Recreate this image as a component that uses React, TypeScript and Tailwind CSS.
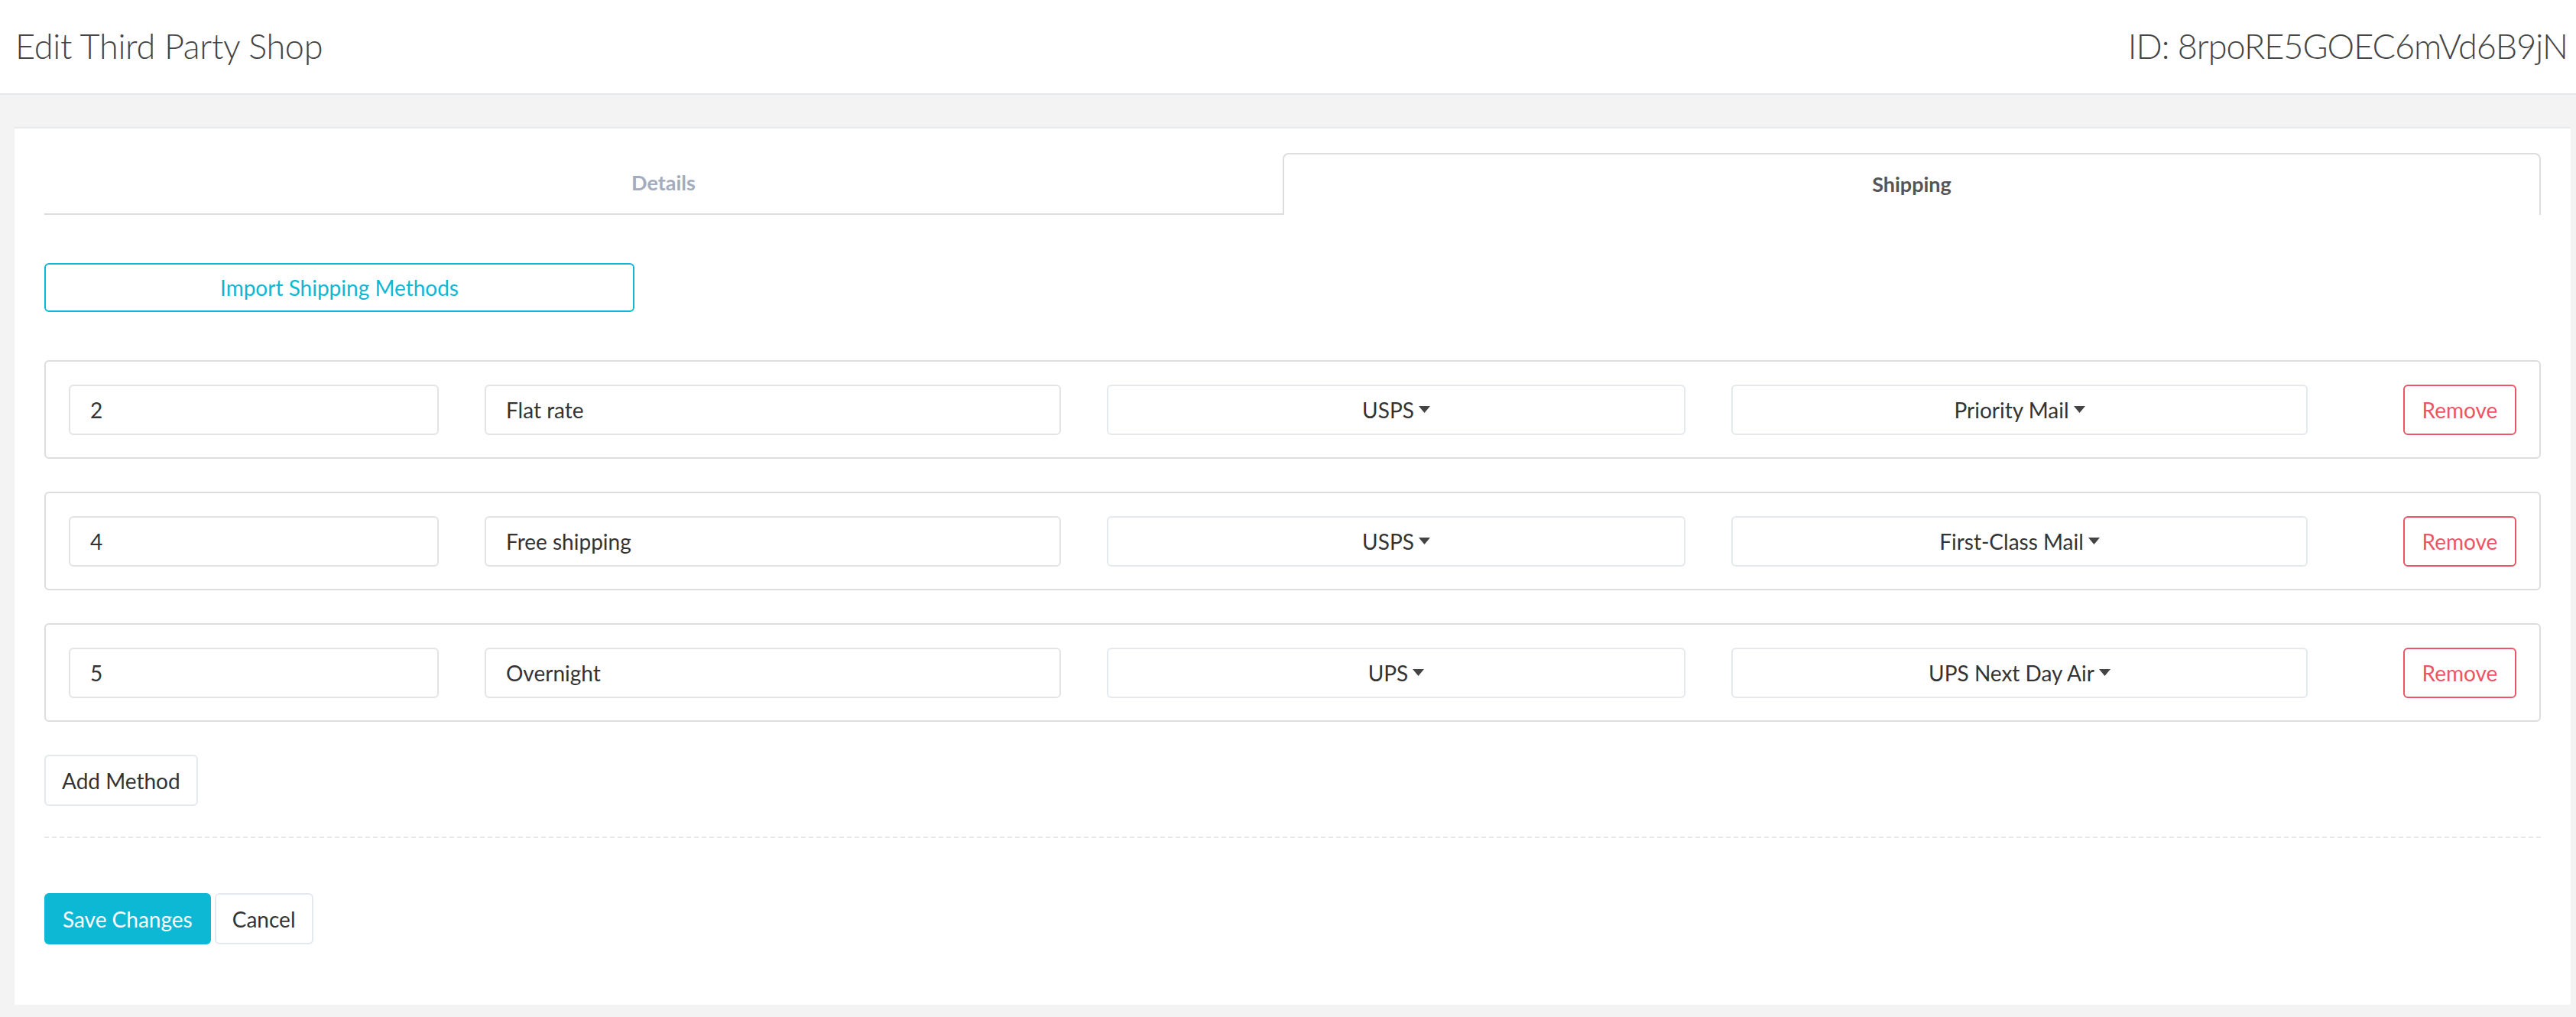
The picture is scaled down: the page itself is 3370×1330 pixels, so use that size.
import { useState } from 'react';

type Method = {
  id: string;
  name: string;
  carrier: string;
  service: string;
};

const INITIAL_METHODS: Method[] = [
  { id: '2', name: 'Flat rate', carrier: 'USPS', service: 'Priority Mail' },
  { id: '4', name: 'Free shipping', carrier: 'USPS', service: 'First-Class Mail' },
  { id: '5', name: 'Overnight', carrier: 'UPS', service: 'UPS Next Day Air' },
];

const FONT = "font-['Lato','Noto_Sans',sans-serif]";

function Caret() {
  return (
    <svg width="15" height="9" viewBox="0 0 15 9" className="ml-[6px] inline-block fill-[#444]">
      <path d="M0 0h15L7.5 9z" />
    </svg>
  );
}

function Dropdown({ label }: { label: string }) {
  return (
    <button
      type="button"
      className="flex h-[66px] w-full items-center justify-center rounded-[6px] border-2 border-[#e5e9ed] bg-white text-[28px] text-[#333]"
    >
      {label}
      <Caret />
    </button>
  );
}

function TextField({ value }: { value: string }) {
  return (
    <input
      readOnly
      value={value}
      className="h-[66px] w-full rounded-[6px] border-2 border-[#e3e3e3] bg-white px-[26px] text-[28px] text-[#333] outline-none"
    />
  );
}

export default function App() {
  const [tab, setTab] = useState<'details' | 'shipping'>('shipping');
  const [methods, setMethods] = useState<Method[]>(INITIAL_METHODS);

  const removeMethod = (idx: number) => setMethods((m) => m.filter((_, i) => i !== idx));
  const addMethod = () =>
    setMethods((m) => [...m, { id: '', name: '', carrier: 'USPS', service: 'Priority Mail' }]);

  return (
    <div className={`${FONT} min-h-[1330px] bg-[#f3f3f3] text-[#333]`}>
      {/* page header */}
      <div className="flex h-[124px] items-center justify-between border-b-2 border-[#e6e9ec] bg-white pl-[20px] pr-[11px]">
        <h1 className="text-[45px] font-light tracking-[-0.3px] text-[#444]">Edit Third Party Shop</h1>
        <div className="text-[45px] font-light tracking-[-1px] text-[#444]">ID: 8rpoRE5GOEC6mVd6B9jN</div>
      </div>

      <div className="pl-[19px] pr-[7px] pt-[42px] pb-[17px]">
        <div className="border-t-2 border-[#e6e9ec] bg-white px-[39px] pt-[32px] pb-[79px]">
          {/* tabs */}
          <div className="grid h-[81px] grid-cols-[1620px_1fr]">
            <button
              type="button"
              onClick={() => setTab('details')}
              className="flex items-center justify-center border-b-2 border-[#dddddd] text-[27px] font-bold text-[#a3acbd]"
            >
              Details
            </button>
            <button
              type="button"
              onClick={() => setTab('shipping')}
              className="flex items-center justify-center rounded-t-[8px] border-2 border-b-0 border-[#dddddd] text-[27px] font-bold text-[#555]"
            >
              Shipping
            </button>
          </div>

          {tab === 'shipping' && (
            <div>
              <button
                type="button"
                className="mt-[63px] flex h-[64px] w-[772px] items-center justify-center rounded-[6px] border-2 border-[#0cb8d3] text-[28px] text-[#0cb8d3]"
              >
                Import Shipping Methods
              </button>

              <div className="mt-[63px] flex flex-col gap-[43px]">
                {methods.map((m, i) => (
                  <div
                    key={i}
                    className="grid h-[129px] grid-cols-[484px_754px_757px_754px_1fr] items-center gap-x-[60px] rounded-[6px] border-2 border-[#dddddd] px-[30px]"
                  >
                    <TextField value={m.id} />
                    <TextField value={m.name} />
                    <Dropdown label={m.carrier} />
                    <Dropdown label={m.service} />
                    <div className="flex justify-end">
                      <button
                        type="button"
                        onClick={() => removeMethod(i)}
                        className="flex h-[66px] w-[148px] items-center justify-center rounded-[6px] border-2 border-[#ec5566] text-[28px] text-[#ec5566]"
                      >
                        Remove
                      </button>
                    </div>
                  </div>
                ))}
              </div>

              <button
                type="button"
                onClick={addMethod}
                className="mt-[43px] flex h-[67px] items-center rounded-[6px] border-2 border-[#e5e9ed] px-[21px] text-[28px] text-[#333]"
              >
                Add Method
              </button>
            </div>
          )}

          <div className="mt-[40px] border-t-2 border-dashed border-[#e8e8e8]" />

          <div className="mt-[72px] flex gap-[5px]">
            <button
              type="button"
              className="flex h-[67px] items-center rounded-[6px] bg-[#0cb8d3] px-[24px] text-[28px] text-white"
            >
              Save Changes
            </button>
            <button
              type="button"
              className="flex h-[67px] items-center rounded-[6px] border-2 border-[#e5e9ed] px-[21px] text-[28px] text-[#333]"
            >
              Cancel
            </button>
          </div>
        </div>
      </div>
    </div>
  );
}
